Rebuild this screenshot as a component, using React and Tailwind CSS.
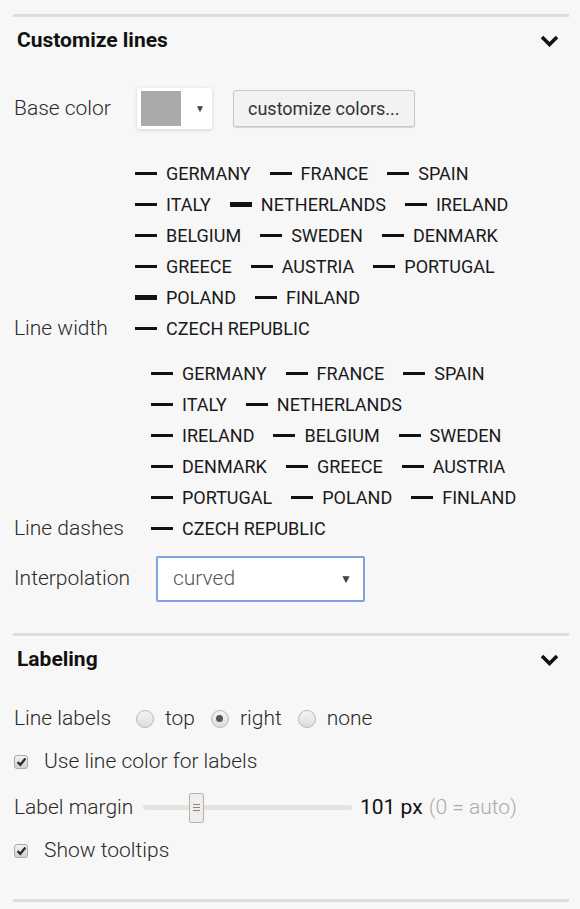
import React, { useState } from 'react';

const rowsWidth = [
  ['GERMANY', 'FRANCE', 'SPAIN'],
  ['ITALY', 'NETHERLANDS', 'IRELAND'],
  ['BELGIUM', 'SWEDEN', 'DENMARK'],
  ['GREECE', 'AUSTRIA', 'PORTUGAL'],
  ['POLAND', 'FINLAND'],
  ['CZECH REPUBLIC'],
];

const rowsDashes = [
  ['GERMANY', 'FRANCE', 'SPAIN'],
  ['ITALY', 'NETHERLANDS'],
  ['IRELAND', 'BELGIUM', 'SWEDEN'],
  ['DENMARK', 'GREECE', 'AUSTRIA'],
  ['PORTUGAL', 'POLAND', 'FINLAND'],
  ['CZECH REPUBLIC'],
];

// lines drawn wider than the rest
const thickSet = new Set(['NETHERLANDS', 'POLAND']);

const Chevron = () => (
  <svg width="19" height="12" viewBox="0 0 19 12" className="block">
    <path d="M2 2 L9.5 9.5 L17 2" fill="none" stroke="#111" strokeWidth="3.6" />
  </svg>
);

const Divider = () => <div className="h-[3px] bg-[#dddddd]" />;

const SectionHeader = ({ title }) => (
  <div className="flex items-center justify-between h-[48px] pl-[4px] pr-[10px]">
    <span className="text-[21px] font-bold text-[#111]">{title}</span>
    <Chevron />
  </div>
);

const Legend = ({ rows, thick }) => (
  <div className="flex flex-col">
    {rows.map((row, i) => (
      <div key={i} className="flex items-center h-[31px] gap-[19px]">
        {row.map((name) => (
          <div key={name} className="flex items-center gap-[9px]">
            <span
              className={
                thick && thickSet.has(name)
                  ? 'block w-[22px] h-[5px] bg-[#111]'
                  : 'block w-[22px] h-[3px] bg-[#111]'
              }
            />
            <span className="text-[18px] text-[#1a1a1a] leading-none">{name}</span>
          </div>
        ))}
      </div>
    ))}
  </div>
);

const Checkbox = ({ label }) => {
  const [on, setOn] = useState(true);
  return (
    <label className="flex items-center h-[43px] pl-[1px] cursor-pointer" onClick={() => setOn(!on)}>
      <span className="w-[14px] h-[14px] rounded-[3px] border border-[#aaa] bg-gradient-to-b from-[#f2f2f2] to-[#d2d2d2] flex items-center justify-center">
        {on && (
          <svg width="11" height="10" viewBox="0 0 11 10">
            <path d="M1.6 5.2 L4.3 7.8 L9.4 1.6" fill="none" stroke="#2a2a2a" strokeWidth="2.3" />
          </svg>
        )}
      </span>
      <span className="ml-[16px] text-[21px] font-light text-[#2a2a2a]">{label}</span>
    </label>
  );
};

const Radio = ({ label, checked, onClick }) => (
  <span className="flex items-center cursor-pointer" onClick={onClick}>
    <span className="w-[18px] h-[18px] rounded-full border border-[#b9b9b9] bg-gradient-to-b from-[#f5f5f5] to-[#dcdcdc] flex items-center justify-center">
      {checked && <span className="w-[7px] h-[7px] rounded-full bg-[#555]" />}
    </span>
    <span className="ml-[11px] text-[21px] font-light text-[#2a2a2a]">{label}</span>
  </span>
);

export default function App() {
  const [pos, setPos] = useState('right');

  return (
    <div className="min-h-screen bg-[#f7f7f7] font-['Roboto','Liberation_Sans',sans-serif] text-[#222]">
      <div className="pl-[13px] pr-[11px] pt-[14px]">
        <Divider />
        <SectionHeader title="Customize lines" />

        {/* Base color */}
        <div className="flex items-center mt-[23px] pl-[1px]">
          <span className="w-[123px] text-[21px] font-light text-[#2a2a2a]">Base color</span>
          <div className="flex items-center w-[75px] h-[41px] bg-white rounded-[3px] shadow-[0_1px_4px_rgba(0,0,0,0.15)] pl-[4px]">
            <span className="w-[40px] h-[35px] bg-[#aaaaaa]" />
            <span className="ml-[14px] text-[10px] text-[#444]">▼</span>
          </div>
          <button className="ml-[21px] h-[37px] px-[14px] rounded-[3px] border border-[#c8c8c8] bg-[#f2f2f2] shadow-[0_1px_1px_rgba(0,0,0,0.15)] text-[18px] text-[#333]">
            customize colors...
          </button>
        </div>

        {/* Line width */}
        <div className="flex items-end mt-[29px] pl-[1px]">
          <span className="w-[121px] text-[21px] font-light text-[#2a2a2a] leading-[31px]">Line width</span>
          <Legend rows={rowsWidth} thick />
        </div>

        {/* Line dashes */}
        <div className="flex items-end mt-[14px] pl-[1px]">
          <span className="w-[137px] text-[21px] font-light text-[#2a2a2a] leading-[31px]">Line dashes</span>
          <Legend rows={rowsDashes} />
        </div>

        {/* Interpolation */}
        <div className="flex items-center mt-[12px] pl-[1px]">
          <span className="w-[142px] text-[21px] font-light text-[#2a2a2a]">Interpolation</span>
          <div className="flex items-center justify-between w-[209px] h-[46px] bg-white border-2 border-[#7ea3df] rounded-[2px] pl-[15px] pr-[11px]">
            <span className="text-[21px] font-light text-[#555]">curved</span>
            <span className="text-[12px] text-[#444]">▼</span>
          </div>
        </div>

        <div className="mt-[31px]">
          <Divider />
        </div>
        <SectionHeader title="Labeling" />

        {/* Line labels */}
        <div className="flex items-center h-[37px] mt-[16px] pl-[1px]">
          <span className="w-[122px] text-[21px] font-light text-[#2a2a2a]">Line labels</span>
          <div className="flex items-center gap-[16px]">
            <Radio label="top" checked={pos === 'top'} onClick={() => setPos('top')} />
            <Radio label="right" checked={pos === 'right'} onClick={() => setPos('right')} />
            <Radio label="none" checked={pos === 'none'} onClick={() => setPos('none')} />
          </div>
        </div>

        <div className="mt-[3px]">
          <Checkbox label="Use line color for labels" />
        </div>

        {/* Label margin */}
        <div className="flex items-center h-[43px] mt-[3px] pl-[1px]">
          <span className="w-[129px] text-[21px] font-light text-[#2a2a2a]">Label margin</span>
          <div className="relative w-[209px] h-[30px] flex items-center">
            <div className="w-full h-[5px] rounded-full bg-[#e6e2dd]" />
            <div className="absolute left-[46px] top-0 w-[15px] h-[30px] bg-[#f1eeea] border border-[#b8b3ad] rounded-[2px] flex flex-col items-center justify-center gap-[2px]">
              <span className="w-[7px] h-[1px] bg-[#8a857f]" />
              <span className="w-[7px] h-[1px] bg-[#8a857f]" />
              <span className="w-[7px] h-[1px] bg-[#8a857f]" />
            </div>
          </div>
          <span className="ml-[8px] text-[21px] text-[#111]">101 px</span>
          <span className="ml-[6px] text-[21px] font-light text-[#aaa]">(0 = auto)</span>
        </div>

        <Checkbox label="Show tooltips" />

        <div className="mt-[27px]">
          <Divider />
        </div>
      </div>
    </div>
  );
}
